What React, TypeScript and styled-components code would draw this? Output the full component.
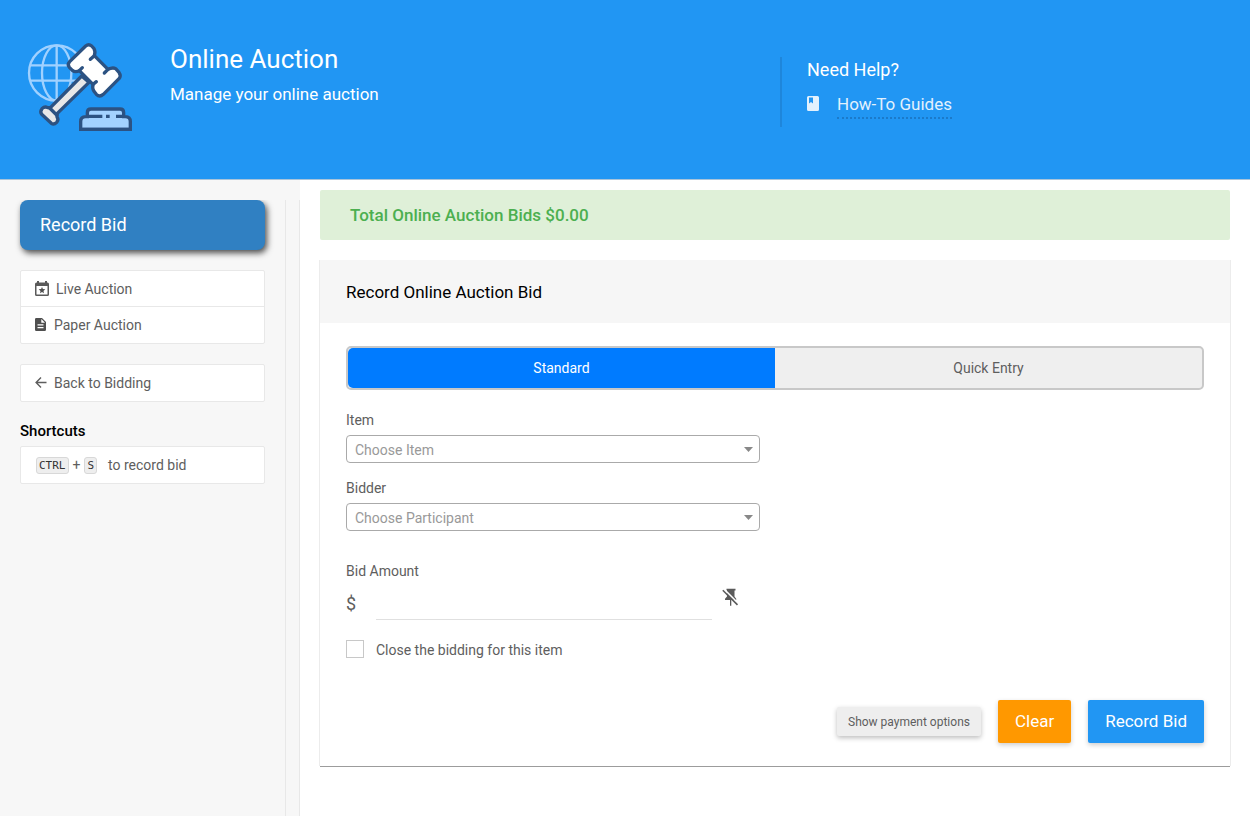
import React, { useState } from 'react';
import styled, { createGlobalStyle, css } from 'styled-components';

const GlobalStyle = createGlobalStyle`
  *, *::before, *::after { box-sizing: border-box; }
  html, body, #root { min-height: 100vh; }
  body {
    margin: 0;
    background: #fff;
    color: #5e5e5e;
    font-family: Roboto, 'Liberation Sans', sans-serif;
    font-size: 14px;
    line-height: 20px;
  }
  button, input, select { font: inherit; color: inherit; }
  h1, h2, h3, p { margin: 0; padding: 0; font-weight: 400; }
  a { color: inherit; text-decoration: none; }
`;

const Page = styled.div`
  display: flex;
  flex-direction: column;
  min-height: 100vh;
`;

const Header = styled.header`
  display: grid;
  grid-template-columns: 5fr 3fr;
  align-items: start;
  padding: 40px 2px 44px 0;
  background: #2196f3;
  border-bottom: 1px solid #a9c4da;
  color: #fff;
`;

const Brand = styled.div`
  display: flex;
  gap: 35px;
  padding-left: 25px;
`;

const PageTitle = styled.h1`
  font-size: 26px;
  line-height: 38px;
`;

const Tagline = styled.p`
  font-size: 17px;
  line-height: 32px;
`;

const Help = styled.section`
  margin-top: 17px;
  height: 70px;
  padding-left: 25px;
  border-left: 2px solid #1e86db;
`;

const HelpTitle = styled.h2`
  font-size: 18px;
  line-height: 26px;
`;

const HelpLink = styled.a`
  display: inline-flex;
  align-items: center;
  gap: 18px;
  margin-top: 8px;
  font-size: 17px;
  line-height: 28px;
  opacity: 0.87;

  svg { margin-bottom: 4px; }
  span { border-bottom: 2px dotted #1b76c4; line-height: 26px; }
`;

const Columns = styled.div`
  display: flex;
  flex: 1;
`;

const Sidebar = styled.aside`
  display: flex;
  flex: 0 0 300px;
  padding-top: 20px;
  background: #f7f7f7;
`;

const SidebarRail = styled.div`
  flex: 1;
  border-right: 1px solid #e8e8e8;
`;

const SidebarInner = styled.div`
  width: 286px;
  height: 100%;
  padding: 0 20px;
  overflow: hidden;
  border-right: 1px solid #e8e8e8;
`;

const CurrentPage = styled.a`
  display: block;
  padding: 10px 20px;
  border-radius: 8px;
  background: #3080c2;
  box-shadow: 2px 3px 6px rgba(0, 0, 0, 0.7);
  color: #fff;
  font-size: 18px;
  line-height: 30px;
`;

const Panel = styled.div<{ $tight?: boolean }>`
  margin-top: ${(p) => (p.$tight ? '5px' : '20px')};
  border: 1px solid #e8e8e8;
  border-radius: 2px;
  background: #fff;
`;

const rowStyle = css`
  display: flex;
  align-items: center;
  height: 36px;
  padding: 0 14px;
`;

const NavLink = styled.a`
  ${rowStyle}
  gap: 7px;
  &:not(:last-child) { border-bottom: 1px solid #e8e8e8; }
`;

const ShortcutRow = styled.div`
  ${rowStyle}
  padding-left: 15px;
`;

const ShortcutText = styled.span`
  margin-left: 11px;
`;

const Key = styled.kbd`
  padding: 0 2px;
  border: 1px solid #d8d8d8;
  border-radius: 3px;
  background: #eee;
  color: #333;
  font-family: 'DejaVu Sans Mono', monospace;
  font-size: 11px;
  line-height: 15px;
`;

const Plus = styled.span`
  padding: 0 4px;
`;

const ShortcutsTitle = styled.h3`
  margin-top: 19px;
  color: #000;
  font-size: 15px;
  font-weight: 500;
`;

const Main = styled.main`
  flex: 1;
  min-width: 0;
  padding: 10px 20px 20px;
`;

const Total = styled.div`
  padding: 10px 30px;
  border-radius: 2px;
  background: #dff0d8;
  color: #4caf50;
  font-size: 17px;
  font-weight: 500;
  line-height: 30px;
`;

const Card = styled.section`
  margin-top: 20px;
  box-shadow: -1px 0 0 #ececec, 1px 0 0 #ececec, 0 1px 0 #9c9c9c;
`;

const CardTitle = styled.h2`
  padding: 16px 26px 15px;
  background: #f6f6f6;
  color: #000;
  font-size: 17px;
  line-height: 32px;
`;

const Form = styled.form`
  padding: 23px 26px;
`;

const Toggle = styled.div`
  display: flex;
  border: 2px solid #c8c8c8;
  border-radius: 5px;
  background: #efefef;
`;

const ToggleButton = styled.button<{ $active: boolean }>`
  flex: 1;
  height: 40px;
  padding: 0;
  border: 0;
  background: ${(p) => (p.$active ? '#007bff' : '#efefef')};
  color: ${(p) => (p.$active ? '#fff' : '#5e5e5e')};
  &:first-child { border-radius: 5px 0 0 5px; }
  &:last-child { border-radius: 0 5px 5px 0; }
`;

const Fields = styled.div`
  width: calc(50% - 15px);
  margin-top: 20px;
`;

const Field = styled.div<{ $gap?: number }>`
  margin-top: ${(p) => p.$gap || 0}px;
`;

const Label = styled.label`
  display: block;
  margin-bottom: 5px;
`;

const SelectWrap = styled.div`
  position: relative;
  svg {
    position: absolute;
    right: 7px;
    top: 12px;
    pointer-events: none;
  }
`;

const Select = styled.select`
  display: block;
  width: 100%;
  height: 28px;
  padding: 1px 8px 0;
  appearance: none;
  border: 1px solid #aaa;
  border-radius: 4px;
  background: #fff;
  color: #999;
`;

const AmountRow = styled.div`
  display: flex;
  height: 34px;
`;

const Currency = styled.span`
  width: 30px;
  font-size: 18px;
  line-height: 36px;
`;

const AmountInput = styled.input`
  flex: 1;
  min-width: 0;
  padding: 0;
  border: 0;
  border-bottom: 1px solid #e0e0e0;
  background: none;
  outline: none;
`;

const PinButton = styled.button`
  display: flex;
  width: 48px;
  padding: 2px 0 0 10px;
  border: 0;
  background: none;
`;

const CheckLabel = styled.label`
  display: flex;
  gap: 12px;
  margin-top: 20px;
`;

const Checkbox = styled.input`
  width: 18px;
  height: 18px;
  margin: 0;
  appearance: none;
  border: 1px solid #c8c8c8;
  background: #fff;
  &:checked { background: #2196f3; }
`;

const Actions = styled.div`
  display: flex;
  align-items: center;
  justify-content: flex-end;
  gap: 17px;
  margin-top: 40px;
`;

const ActionButton = styled.button<{ $color: string }>`
  height: 43px;
  padding: 0 17px 1px;
  border: 0;
  border-radius: 2px;
  background: ${(p) => p.$color};
  box-shadow: 0 2px 5px rgba(0, 0, 0, 0.2);
  color: #fff;
  font-size: 17px;
`;

const OptionsButton = styled.button`
  height: 29px;
  padding: 0 11px;
  border: 0;
  border-radius: 2px;
  background: #eee;
  box-shadow: 0 2px 5px rgba(0, 0, 0, 0.26);
  font-size: 12px;
`;

const GavelLogo = () => (
  <svg width="110" height="95" viewBox="45 30 330 285" fill="none" aria-hidden="true">
    <g stroke="#a0d1ff" strokeWidth="7">
      <circle cx="140" cy="129" r="83" />
      <ellipse cx="140" cy="129" rx="44" ry="83" />
      <path d="M140 46v166M62 106h156M62 152h156" />
    </g>
    <g stroke="#2c5282" strokeWidth="10" strokeLinejoin="round" strokeLinecap="round">
      <path fill="#e8e8e8" d="M215 138L122 232L113 233Q104 228 96 236Q89 245 95 253L124 280Q132 285 140 277Q147 269 141 261L142 250L237 157Z" />
      <path d="M119 234L140 255" />
      <path fill="#fff" d="M227 48Q236 40 245 48L252 56Q257 65 253 77L294 118Q308 111 317 116L327 127Q334 137 327 146L280 193Q269 203 259 193L252 184Q246 175 249 163L208 122Q196 128 187 121L178 112Q171 103 179 95Z" />
      <path d="M253 77L241 88M294 118L283 129M208 122L217 113M249 163L259 155" />
      <path fill="#a3d2ff" strokeLinejoin="miter" d="M212 298V275Q212 260 227 260H232V248Q232 237 243 237H330Q341 237 341 248V260H346Q361 260 361 275V298Z" />
    </g>
    <path stroke="#2c5282" strokeWidth="10" d="M228 259H277M288 259H299M318 259H345M212 298H361" />
  </svg>
);

const BookIcon = () => (
  <svg width="12" height="15" viewBox="0 0 12 15" aria-hidden="true">
    <path fill="#fff" fillRule="evenodd" d="M1.500 0h9A1.500 1.500 0 0 1 12 1.500v12a1.500 1.500 0 0 1-1.500 1.500h-9A1.500 1.500 0 0 1 0 13.500v-12A1.500 1.500 0 0 1 1.500 0zM2 1.500v6l2-1.500 2 1.500v-6z" />
  </svg>
);

const CalendarIcon = () => (
  <svg width="14" height="15" viewBox="0 0 14 15" aria-hidden="true">
    <path fill="#5a5a5a" fillRule="evenodd" d="M2 0h2v1.500h6V0h2v1.500h.5A1.500 1.500 0 0 1 14 3v10.500a1.500 1.500 0 0 1-1.500 1.500h-11A1.500 1.500 0 0 1 0 13.500V3a1.500 1.500 0 0 1 1.500-1.500H2zM1.500 5v8.500h11V5z" />
    <path fill="#4f4f4f" d="M7 5.900l.9 2.200 2.400.2-1.800 1.600.5 2.300-2-1.200-2 1.200.5-2.300-1.800-1.600 2.400-.2z" />
  </svg>
);

const PaperIcon = () => (
  <svg width="12" height="15" viewBox="0 0 12 15" aria-hidden="true">
    <path fill="#4f4f4f" fillRule="evenodd" d="M1.300 0H7l4 4v7.700A1.300 1.300 0 0 1 9.700 13H1.300A1.300 1.300 0 0 1 0 11.700V1.300A1.300 1.300 0 0 1 1.300 0zM6.300 1v3.700H10zM2.500 6.300v1.200h6V6.300zM2.500 9v1.200h6V9z" />
  </svg>
);

const BackIcon = () => (
  <svg width="12" height="12" viewBox="0 0 12 12" fill="none" stroke="#5e5e5e" strokeWidth="1.400" aria-hidden="true">
    <path d="M11.500 5.500H1.200M6 .6L1.100 5.500 6 10.400" />
  </svg>
);

const Caret = () => (
  <svg width="9" height="5" viewBox="0 0 9 5" aria-hidden="true">
    <path fill="#888" d="M0 0h9L4.500 5z" />
  </svg>
);

const PinOffIcon = () => (
  <svg width="17" height="19" viewBox="0 0 17 19" aria-hidden="true">
    <path fill="#5a5a5a" d="M4.500.7h9v1.800h-1v6l1.700 2.200V12H9.300v5.800H8V12H3v-1.300l2-2.200v-6h-.5z" />
    <path stroke="#fff" strokeWidth="1.500" d="M1.800.9L17 16.100" />
    <path stroke="#5a5a5a" strokeWidth="1.600" d="M.8 2.200L15.500 16.900" />
  </svg>
);

export default function App() {
  const [mode, setMode] = useState<'standard' | 'quick'>('standard');
  return (
    <Page>
      <GlobalStyle />
      <Header>
        <Brand>
          <GavelLogo />
          <div>
            <PageTitle>Online Auction</PageTitle>
            <Tagline>Manage your online auction</Tagline>
          </div>
        </Brand>
        <Help>
          <HelpTitle>Need Help?</HelpTitle>
          <HelpLink href="#guides">
            <BookIcon />
            <span>How-To Guides</span>
          </HelpLink>
        </Help>
      </Header>
      <Columns>
        <Sidebar>
          <SidebarRail>
            <SidebarInner>
              <CurrentPage href="#record">Record Bid</CurrentPage>
              <Panel as="nav">
                <NavLink href="#live"><CalendarIcon />Live Auction</NavLink>
                <NavLink href="#paper"><PaperIcon />Paper Auction</NavLink>
              </Panel>
              <Panel>
                <NavLink href="#bidding"><BackIcon />Back to Bidding</NavLink>
              </Panel>
              <ShortcutsTitle>Shortcuts</ShortcutsTitle>
              <Panel $tight>
                <ShortcutRow>
                  <Key>CTRL</Key>
                  <Plus>+</Plus>
                  <Key>S</Key>
                  <ShortcutText>to record bid</ShortcutText>
                </ShortcutRow>
              </Panel>
            </SidebarInner>
          </SidebarRail>
        </Sidebar>
        <Main>
          <Total>Total Online Auction Bids $0.00</Total>
          <Card>
            <CardTitle>Record Online Auction Bid</CardTitle>
            <Form onSubmit={(e) => e.preventDefault()}>
              <Toggle>
                <ToggleButton type="button" $active={mode === 'standard'} aria-pressed={mode === 'standard'} onClick={() => setMode('standard')}>
                  Standard
                </ToggleButton>
                <ToggleButton type="button" $active={mode === 'quick'} aria-pressed={mode === 'quick'} onClick={() => setMode('quick')}>
                  Quick Entry
                </ToggleButton>
              </Toggle>
              <Fields>
                <Field>
                  <Label htmlFor="item">Item</Label>
                  <SelectWrap>
                    <Select id="item"><option>Choose Item</option></Select>
                    <Caret />
                  </SelectWrap>
                </Field>
                <Field $gap={15}>
                  <Label htmlFor="bidder">Bidder</Label>
                  <SelectWrap>
                    <Select id="bidder"><option>Choose Participant</option></Select>
                    <Caret />
                  </SelectWrap>
                </Field>
                <Field $gap={30}>
                  <Label htmlFor="amount">Bid Amount</Label>
                  <AmountRow>
                    <Currency>$</Currency>
                    <AmountInput id="amount" type="text" inputMode="decimal" />
                    <PinButton type="button" aria-label="Pin bid amount"><PinOffIcon /></PinButton>
                  </AmountRow>
                </Field>
                <CheckLabel>
                  <Checkbox type="checkbox" />
                  Close the bidding for this item
                </CheckLabel>
              </Fields>
              <Actions>
                <OptionsButton type="button">Show payment options</OptionsButton>
                <ActionButton type="button" $color="#ff9800">Clear</ActionButton>
                <ActionButton type="submit" $color="#2196f3">Record Bid</ActionButton>
              </Actions>
            </Form>
          </Card>
        </Main>
      </Columns>
    </Page>
  );
}
